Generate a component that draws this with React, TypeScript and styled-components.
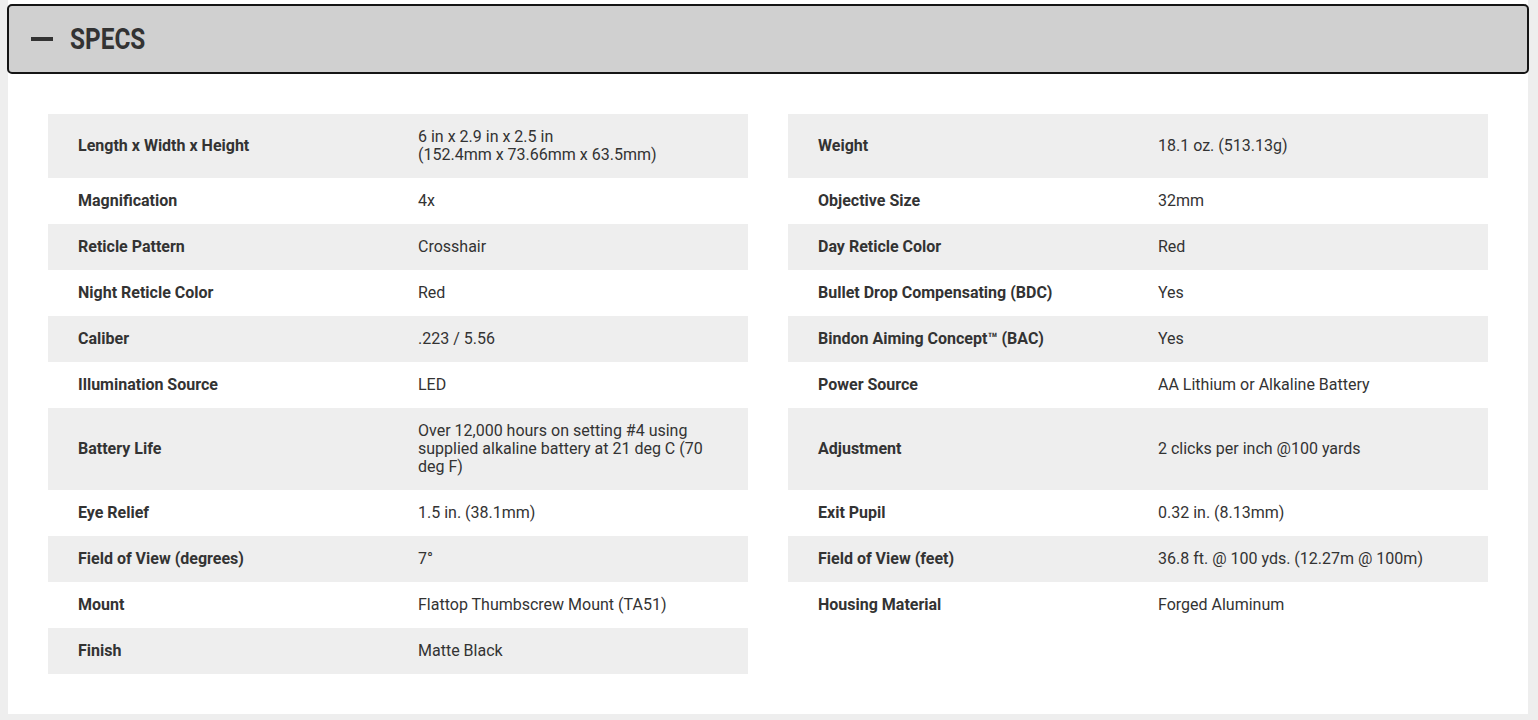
import React from 'react'
import styled, { createGlobalStyle } from 'styled-components'

const GlobalStyle = createGlobalStyle`
  html, body {
    margin: 0;
    padding: 0;
    background: #eeeeee;
    font-family: Roboto, "Liberation Sans", Arial, sans-serif;
    color: #333333;
  }
`

type Spec = { label: string; value: React.ReactNode }
type SpecPair = [Spec, Spec | null]

const specs: SpecPair[] = [
  [
    { label: 'Length x Width x Height', value: <>6 in x 2.9 in x 2.5 in<br />(152.4mm x 73.66mm x 63.5mm)</> },
    { label: 'Weight', value: '18.1 oz. (513.13g)' }
  ],
  [{ label: 'Magnification', value: '4x' }, { label: 'Objective Size', value: '32mm' }],
  [{ label: 'Reticle Pattern', value: 'Crosshair' }, { label: 'Day Reticle Color', value: 'Red' }],
  [{ label: 'Night Reticle Color', value: 'Red' }, { label: 'Bullet Drop Compensating (BDC)', value: 'Yes' }],
  [{ label: 'Caliber', value: '.223 / 5.56' }, { label: 'Bindon Aiming Concept™ (BAC)', value: 'Yes' }],
  [{ label: 'Illumination Source', value: 'LED' }, { label: 'Power Source', value: 'AA Lithium or Alkaline Battery' }],
  [
    { label: 'Battery Life', value: 'Over 12,000 hours on setting #4 using supplied alkaline battery at 21 deg C (70 deg F)' },
    { label: 'Adjustment', value: '2 clicks per inch @100 yards' }
  ],
  [{ label: 'Eye Relief', value: '1.5 in. (38.1mm)' }, { label: 'Exit Pupil', value: '0.32 in. (8.13mm)' }],
  [{ label: 'Field of View (degrees)', value: '7°' }, { label: 'Field of View (feet)', value: '36.8 ft. @ 100 yds. (12.27m @ 100m)' }],
  [{ label: 'Mount', value: 'Flattop Thumbscrew Mount (TA51)' }, { label: 'Housing Material', value: 'Forged Aluminum' }],
  [{ label: 'Finish', value: 'Matte Black' }, null]
]

const Panel = styled.section`
  margin-left: 8px;
  width: 1520px;
  background: #ffffff;
  padding: 4px 0 40px;
`

const Header = styled.div`
  margin: 0 -1px;
  height: 66px;
  border: 2px solid #151515;
  border-radius: 5px;
  background: #d0d0d0;
  display: flex;
  align-items: center;
  padding-left: 22px;
  gap: 17px;
`

const Minus = styled.span`
  display: block;
  width: 22px;
  height: 4px;
  background: #333333;
`

const Title = styled.h2`
  margin: 0;
  font-size: 29px;
  font-weight: 700;
  line-height: 1;
  color: #333333;
  padding-top: 1px;
  transform: scaleX(0.84);
  transform-origin: left center;
`

const Grid = styled.div`
  display: grid;
  grid-template-columns: 700px 700px;
  column-gap: 40px;
  padding: 40px 40px 0;
`

const Row = styled.div<{ $shaded: boolean }>`
  display: grid;
  grid-template-columns: 370px 1fr;
  align-items: center;
  background: ${({ $shaded }) => ($shaded ? '#eeeeee' : '#ffffff')};
  padding: 14px 0;
  font-size: 16px;
  line-height: 18px;
`

const Label = styled.div`
  padding-left: 30px;
  font-weight: 700;
`

const Value = styled.div`
  padding-right: 30px;
  font-weight: 400;
`

const SpecRow = ({ spec, shaded }: { spec: Spec | null; shaded: boolean }) => {
  if (!spec) return <div />
  return (
    <Row $shaded={shaded}>
      <Label>{spec.label}</Label>
      <Value>{spec.value}</Value>
    </Row>
  )
}

const App = () => {
  return (
    <>
      <GlobalStyle />
      <Panel>
        <Header>
          <Minus />
          <Title>SPECS</Title>
        </Header>
        <Grid>
          {specs.map(([left, right], i) => (
            <React.Fragment key={i}>
              <SpecRow spec={left} shaded={i % 2 === 0} />
              <SpecRow spec={right} shaded={i % 2 === 0} />
            </React.Fragment>
          ))}
        </Grid>
      </Panel>
    </>
  )
}

export default App
